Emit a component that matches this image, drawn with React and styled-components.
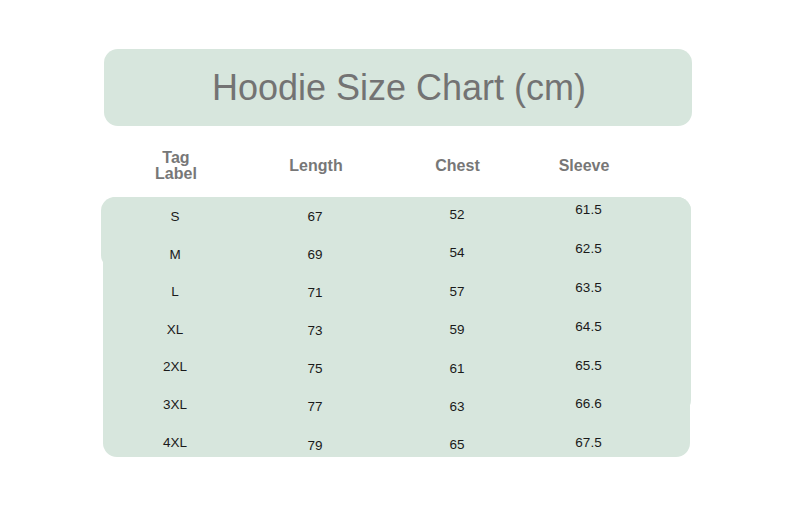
import React from "react";
import styled, { createGlobalStyle } from "styled-components";

const Global = createGlobalStyle`
  html, body { margin: 0; padding: 0; background: #ffffff; }
  body { font-family: "Liberation Sans", Arial, sans-serif; }
`;

const MINT = "#d7e6dd";

const Page = styled.div`
  width: 797px;
  height: 514px;
  box-sizing: border-box;
  padding: 49px 0 0 104px;
`;

const Sheet = styled.div`
  width: 588px;
  display: flex;
  flex-direction: column;
`;

const TitleBox = styled.div`
  height: 77px;
  border-radius: 14px;
  background: ${MINT};
  display: flex;
  align-items: center;
  justify-content: center;
`;

const Title = styled.h1`
  margin: 0;
  font-family: "Liberation Sans", Arial, sans-serif;
  font-weight: 400;
  font-size: 36px;
  line-height: 40px;
  color: #737373;
  transform: translate(1px, 0px);
`;

const cols = "144px 136px 148px 114px";

const HeaderRow = styled.div`
  height: 71px;
  box-sizing: border-box;
  padding-top: 8px;
  display: grid;
  grid-template-columns: ${cols};
  align-items: center;
`;

const HeadCell = styled.div`
  text-align: center;
  font-weight: 700;
  font-size: 16px;
  line-height: 16px;
  color: #777777;
  margin-left: ${(p) => p.$shift || 0}px;
`;

const Panel = styled.div`
  position: relative;
  height: 260px;
  margin-left: -1px;
  width: 587px;
  border-radius: 14px;
  background: ${MINT};
  &::before {
    content: "";
    position: absolute;
    left: -2px;
    right: -1px;
    top: 0;
    height: 72px;
    border-radius: 14px;
    background: ${MINT};
  }
  &::after {
    content: "";
    position: absolute;
    left: 0;
    right: -1px;
    top: 0;
    bottom: 43px;
    border-radius: 14px;
    background: ${MINT};
  }
`;

const Body = styled.div`
  position: relative;
  z-index: 1;
  display: grid;
  grid-template-columns: ${cols};
  height: 100%;
`;

const Column = styled.div`
  display: flex;
  flex-direction: column;
  align-items: center;
  padding-top: ${(p) => p.$top}px;
  gap: ${(p) => p.$gap}px;
  margin-left: ${(p) => p.$shift || 0}px;
`;

const Cell = styled.div`
  font-size: 13.5px;
  line-height: 16px;
  height: 16px;
  color: #1a1a1a;
`;

const columns = [
  { head: ["Tag", "Label"], top: 12, gap: 21.6, headShift: 0, shift: 0, values: ["S", "M", "L", "XL", "2XL", "3XL", "4XL"] },
  { head: ["Length"], top: 12, gap: 22.1, headShift: 0, shift: 0, values: ["67", "69", "71", "73", "75", "77", "79"] },
  { head: ["Chest"], top: 10, gap: 22.4, headShift: -1, shift: 0, values: ["52", "54", "57", "59", "61", "63", "65"] },
  { head: ["Sleeve"], top: 5, gap: 22.9, headShift: -10, shift: 1, values: ["61.5", "62.5", "63.5", "64.5", "65.5", "66.6", "67.5"] },
];

export default function App() {
  return (
    <>
      <Global />
      <Page>
        <Sheet>
          <TitleBox>
            <Title>Hoodie Size Chart (cm)</Title>
          </TitleBox>
          <HeaderRow>
            {columns.map((c, i) => (
              <HeadCell key={i} $shift={c.headShift}>
                {c.head.map((h, j) => (
                  <div key={j}>{h}</div>
                ))}
              </HeadCell>
            ))}
          </HeaderRow>
          <Panel>
            <Body>
              {columns.map((c, i) => (
                <Column key={i} $top={c.top} $gap={c.gap} $shift={c.shift}>
                  {c.values.map((v) => (
                    <Cell key={v}>{v}</Cell>
                  ))}
                </Column>
              ))}
            </Body>
          </Panel>
        </Sheet>
      </Page>
    </>
  );
}
